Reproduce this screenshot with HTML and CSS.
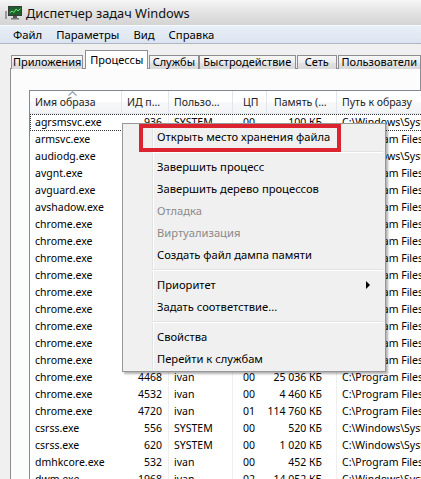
FILE: index.html
```html
<!DOCTYPE html>
<html lang="ru">
<head>
<meta charset="utf-8">
<title>Диспетчер задач Windows</title>
<link rel="stylesheet" href="styles.css">
</head>
<body>
<div class="window">
  <div class="titlebar">
    <svg class="app-icon" width="17" height="14" viewBox="0 0 17 14">
      <rect x="0" y="5" width="2" height="8" fill="#9a9a9a"/>
      <rect x="3" y="0" width="14" height="10" fill="#3a3a3a"/>
      <rect x="4" y="1" width="12" height="8" fill="#1f5f2c"/>
      <polyline points="4.5,7 7,5 9,6.5 11,3 13,5 15.5,2.5" fill="none" stroke="#6fe07a" stroke-width="1"/>
      <rect x="8" y="10" width="4" height="2" fill="#555"/>
      <rect x="6" y="12" width="8" height="1.5" fill="#777"/>
    </svg>
    <span class="title">Диспетчер задач Windows</span>
  </div>
  <div class="menubar">
    <span class="menu-item">Файл</span>
    <span class="menu-item">Параметры</span>
    <span class="menu-item">Вид</span>
    <span class="menu-item">Справка</span>
  </div>
  <div class="tabstrip">
    <div class="tab tab-apps">Приложения</div>
    <div class="tab tab-proc active">Процессы</div>
    <div class="tab tab-svc">Службы</div>
    <div class="tab tab-perf">Быстродействие</div>
    <div class="tab tab-net">Сеть</div>
    <div class="tab tab-users">Пользователи</div>
  </div>
  <div class="panel">
    <div class="listview">
      <div class="lv-header">
        <div class="hcell c-name sorted">Имя образа<svg class="sort-arrow" width="9" height="5" viewBox="0 0 9 5"><polyline points="0.5,4.5 4.5,0.8 8.5,4.5" fill="none" stroke="#8ea0b8" stroke-width="1.2"/></svg></div>
        <div class="hcell c-pid">ИД п...</div>
        <div class="hcell c-user">Пользо...</div>
        <div class="hcell c-cpu">ЦП</div>
        <div class="hcell c-mem">Память (...</div>
        <div class="hcell c-path">Путь к образу</div>
      </div>
      <div class="row focus"><div class="cell c-name">agrsmsvc.exe</div><div class="cell c-pid">936</div><div class="cell c-user">SYSTEM</div><div class="cell c-cpu">00</div><div class="cell c-mem">100 КБ</div><div class="cell c-path">C:\Windows\System32\agrsmsvc.exe</div></div>
      <div class="row"><div class="cell c-name">armsvc.exe</div><div class="cell c-pid">1356</div><div class="cell c-user">SYSTEM</div><div class="cell c-cpu">00</div><div class="cell c-mem">468 КБ</div><div class="cell c-path">C:\Program Files\Common Files</div></div>
      <div class="row"><div class="cell c-name">audiodg.exe</div><div class="cell c-pid">2392</div><div class="cell c-user">LOCAL ...</div><div class="cell c-cpu">00</div><div class="cell c-mem">13 468 КБ</div><div class="cell c-path">C:\Windows\System32\audiodg.exe</div></div>
      <div class="row"><div class="cell c-name">avgnt.exe</div><div class="cell c-pid">3160</div><div class="cell c-user">ivan</div><div class="cell c-cpu">00</div><div class="cell c-mem">1 844 КБ</div><div class="cell c-path">C:\Program Files\Avira</div></div>
      <div class="row"><div class="cell c-name">avguard.exe</div><div class="cell c-pid">1420</div><div class="cell c-user">SYSTEM</div><div class="cell c-cpu">00</div><div class="cell c-mem">27 712 КБ</div><div class="cell c-path">C:\Program Files\Avira</div></div>
      <div class="row"><div class="cell c-name">avshadow.exe</div><div class="cell c-pid">1604</div><div class="cell c-user">SYSTEM</div><div class="cell c-cpu">00</div><div class="cell c-mem">1 020 КБ</div><div class="cell c-path">C:\Program Files\Avira</div></div>
      <div class="row"><div class="cell c-name">chrome.exe</div><div class="cell c-pid">2064</div><div class="cell c-user">ivan</div><div class="cell c-cpu">00</div><div class="cell c-mem">61 208 КБ</div><div class="cell c-path">C:\Program Files\Google</div></div>
      <div class="row"><div class="cell c-name">chrome.exe</div><div class="cell c-pid">2348</div><div class="cell c-user">ivan</div><div class="cell c-cpu">00</div><div class="cell c-mem">3 116 КБ</div><div class="cell c-path">C:\Program Files\Google</div></div>
      <div class="row"><div class="cell c-name">chrome.exe</div><div class="cell c-pid">2580</div><div class="cell c-user">ivan</div><div class="cell c-cpu">00</div><div class="cell c-mem">18 940 КБ</div><div class="cell c-path">C:\Program Files\Google</div></div>
      <div class="row"><div class="cell c-name">chrome.exe</div><div class="cell c-pid">2836</div><div class="cell c-user">ivan</div><div class="cell c-cpu">00</div><div class="cell c-mem">9 652 КБ</div><div class="cell c-path">C:\Program Files\Google</div></div>
      <div class="row"><div class="cell c-name">chrome.exe</div><div class="cell c-pid">3012</div><div class="cell c-user">ivan</div><div class="cell c-cpu">00</div><div class="cell c-mem">22 408 КБ</div><div class="cell c-path">C:\Program Files\Google</div></div>
      <div class="row"><div class="cell c-name">chrome.exe</div><div class="cell c-pid">3348</div><div class="cell c-user">ivan</div><div class="cell c-cpu">00</div><div class="cell c-mem">7 284 КБ</div><div class="cell c-path">C:\Program Files\Google</div></div>
      <div class="row"><div class="cell c-name">chrome.exe</div><div class="cell c-pid">3576</div><div class="cell c-user">ivan</div><div class="cell c-cpu">00</div><div class="cell c-mem">15 360 КБ</div><div class="cell c-path">C:\Program Files\Google</div></div>
      <div class="row"><div class="cell c-name">chrome.exe</div><div class="cell c-pid">3904</div><div class="cell c-user">ivan</div><div class="cell c-cpu">00</div><div class="cell c-mem">5 128 КБ</div><div class="cell c-path">C:\Program Files\Google</div></div>
      <div class="row"><div class="cell c-name">chrome.exe</div><div class="cell c-pid">4196</div><div class="cell c-user">ivan</div><div class="cell c-cpu">00</div><div class="cell c-mem">33 824 КБ</div><div class="cell c-path">C:\Program Files\Google</div></div>
      <div class="row"><div class="cell c-name">chrome.exe</div><div class="cell c-pid">4468</div><div class="cell c-user">ivan</div><div class="cell c-cpu">00</div><div class="cell c-mem">25 036 КБ</div><div class="cell c-path">C:\Program Files\Google</div></div>
      <div class="row"><div class="cell c-name">chrome.exe</div><div class="cell c-pid">4532</div><div class="cell c-user">ivan</div><div class="cell c-cpu">00</div><div class="cell c-mem">4 460 КБ</div><div class="cell c-path">C:\Program Files\Google</div></div>
      <div class="row"><div class="cell c-name">chrome.exe</div><div class="cell c-pid">4720</div><div class="cell c-user">ivan</div><div class="cell c-cpu">01</div><div class="cell c-mem">114 760 КБ</div><div class="cell c-path">C:\Program Files\Google</div></div>
      <div class="row"><div class="cell c-name">csrss.exe</div><div class="cell c-pid">556</div><div class="cell c-user">SYSTEM</div><div class="cell c-cpu">00</div><div class="cell c-mem">520 КБ</div><div class="cell c-path">C:\Windows\System32\csrss.exe</div></div>
      <div class="row"><div class="cell c-name">csrss.exe</div><div class="cell c-pid">620</div><div class="cell c-user">SYSTEM</div><div class="cell c-cpu">00</div><div class="cell c-mem">1 020 КБ</div><div class="cell c-path">C:\Windows\System32\csrss.exe</div></div>
      <div class="row"><div class="cell c-name">dmhkcore.exe</div><div class="cell c-pid">532</div><div class="cell c-user">ivan</div><div class="cell c-cpu">00</div><div class="cell c-mem">452 КБ</div><div class="cell c-path">C:\Program Files\DMHK</div></div>
      <div class="row"><div class="cell c-name">dwm.exe</div><div class="cell c-pid">1968</div><div class="cell c-user">ivan</div><div class="cell c-cpu">02</div><div class="cell c-mem">14 052 КБ</div><div class="cell c-path">C:\Windows\System32\dwm.exe</div></div>
    </div>
  </div>

  <div class="context-menu">
    <div class="cm-item">Открыть место хранения файла</div>
    <div class="cm-sep"></div>
    <div class="cm-item">Завершить процесс</div>
    <div class="cm-item">Завершить дерево процессов</div>
    <div class="cm-item disabled">Отладка</div>
    <div class="cm-item disabled">Виртуализация</div>
    <div class="cm-item">Создать файл дампа памяти</div>
    <div class="cm-sep"></div>
    <div class="cm-item has-sub">Приоритет<span class="sub-arrow"></span></div>
    <div class="cm-item">Задать соответствие...</div>
    <div class="cm-sep"></div>
    <div class="cm-item">Свойства</div>
    <div class="cm-item">Перейти к службам</div>
  </div>
  <div class="highlight"></div>
</div>
</body>
</html>
```
FILE: styles.css
```css
* { box-sizing: border-box; }
html, body { margin: 0; padding: 0; }
body {
  background: #f0f0f0;
  font-family: "Noto Sans", "Segoe UI", sans-serif;
  color: #000;
}
.window {
  width: 421px;
  height: 479px;
  overflow: hidden;
  position: relative;
  background: #f0f0f0;
}

/* title bar */
.titlebar {
  height: 25px;
  display: flex;
  align-items: center;
  padding-left: 5px;
  background: linear-gradient(#f6f6f6, #e4e4e4 45%, #d4d4d4);
}
.app-icon { margin-right: 4px; margin-top: 1px; }
.title { font-size: 12.8px; color: #111; }

/* menu bar */
.menubar {
  height: 19px;
  display: flex;
  align-items: center;
  padding-left: 6px;
  background: linear-gradient(#e9eff7, #dbe4f0);
  border-top: 1px solid #f7f9fc;
  border-bottom: 1px solid #aeb6c2;
  font-size: 11.3px;
}
.menu-item { padding: 0 7px; }

/* tabs */
.tabstrip {
  display: flex;
  align-items: flex-end;
  height: 19px;
  margin-top: 6px;
  padding-left: 11px;
}
.tab {
  height: 14px;
  border: 1px solid #8c8e94;
  border-bottom: none;
  background: linear-gradient(#f7f7f7, #ececec 50%, #e2e2e2 51%, #d9d9d9);
  font-size: 11px;
  line-height: 12px;
  text-align: center;
  white-space: nowrap;
  overflow: hidden;
  margin-left: 1px;
}
.tab.active {
  height: 19px;
  background: #fff;
  position: relative;
  z-index: 1;
  line-height: 17px;
  margin-left: 2px;
}
.tab-apps { width: 73px; margin-left: 0; }
.tab-proc { width: 63px; }
.tab-svc { width: 50px; margin-left: 1px; }
.tab-perf { width: 98px; margin-left: 0; }
.tab-net { width: 40px; }
.tab-users { width: 84px; }

/* panel */
.panel {
  margin: -1px 0 0 10px;
  border: 1px solid #8c8e94;
  background: #fcfcfc;
  height: 500px;
  padding: 21px 0 0 18px;
}
.listview {
  width: 620px;
  height: 480px;
  border-top: 1px solid #828790;
  border-left: 1px solid #828790;
  background: #fff;
  font-size: 10.5px;
}
.lv-header {
  display: flex;
  height: 23px;
  border-bottom: 1px solid #e3e6eb;
  background: linear-gradient(#ffffff, #ffffff 50%, #f7f8fa 51%, #f2f3f5);
}
.hcell {
  height: 22px;
  line-height: 22px;
  padding-left: 5px;
  border-right: 1px solid #e3e6eb;
  white-space: nowrap;
  overflow: hidden;
  color: #1e1e1e;
}
.hcell.sorted { position: relative; }
.sort-arrow { position: absolute; left: 38px; top: 0; }
.hcell.c-cpu { padding-left: 10px; }
.hcell.c-mem { padding-left: 7px; }

.c-name { width: 92px; }
.c-pid { width: 47px; }
.c-user { width: 64px; }
.c-cpu { width: 34px; }
.c-mem { width: 70px; }
.c-path { width: 300px; border-right: none; }

.row {
  display: flex;
  height: 17px;
  line-height: 17px;
  white-space: nowrap;
}
.row.focus { outline: 1px dotted #333; outline-offset: -1px; }
.cell { overflow: hidden; height: 17px; }
.cell.c-name { padding-left: 5px; }
.cell.c-pid { text-align: right; padding-right: 6px; border-right: 1px solid #efefef; }
.cell.c-user { padding-left: 5px; border-right: 1px solid #efefef; }
.cell.c-cpu { padding-left: 10px; }
.cell.c-mem { text-align: right; padding-right: 14px; border-right: 1px solid #efefef; }
.cell.c-path { padding-left: 5px; }

/* context menu */
.context-menu {
  position: absolute;
  left: 122px;
  top: 123px;
  width: 264px;
  padding: 2px 2px 1px 2px;
  border: 1px solid #979797;
  background: linear-gradient(to right, #f0f0f0 29px, #e2e3e3 29px, #e2e3e3 30px, #ffffff 30px, #ffffff 31px, #f0f0f0 31px);
  box-shadow: 2px 2px 2px rgba(0, 0, 0, 0.3);
  font-size: 11.2px;
  z-index: 5;
}
.cm-item {
  height: 22px;
  line-height: 22px;
  padding-left: 32px;
  white-space: nowrap;
  display: flex;
  align-items: center;
}
.cm-item.disabled { color: #8a8a8a; }
.sub-arrow {
  margin-left: auto;
  margin-right: 13px;
  width: 0;
  height: 0;
  border-top: 4px solid transparent;
  border-bottom: 4px solid transparent;
  border-left: 4px solid #000;
}
.cm-sep {
  height: 8px;
  margin-left: 27px;
  padding-top: 3px;
}
.cm-sep::before {
  content: "";
  display: block;
  height: 1px;
  background: #e2e3e3;
  border-bottom: 1px solid #fff;
  box-sizing: content-box;
}

.highlight {
  position: absolute;
  left: 139px;
  top: 124px;
  width: 202px;
  height: 28px;
  border: 4px solid #dc2431;
  z-index: 6;
}
```
